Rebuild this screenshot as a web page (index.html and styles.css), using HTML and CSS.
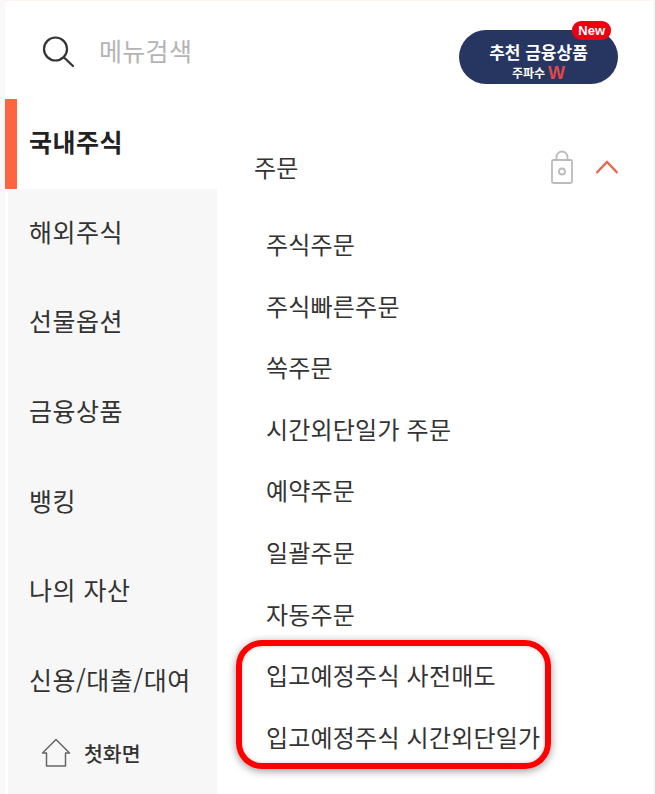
FILE: index.html
```html
<!DOCTYPE html>
<html lang="ko">
<head>
    <meta charset="UTF-8">
    <meta name="viewport" content="width=device-width, initial-scale=1.0">
    <title>메뉴</title>
    <link rel="stylesheet" href="styles.css">
</head>
<body>
    <div class="container">
        <div class="top-bar">
            <div class="search-box">
                <svg class="search-icon" width="36" height="36" viewBox="0 0 36 36" fill="none" stroke="#333" stroke-width="2.2" stroke-linecap="round">
                    <circle cx="15.5" cy="15" r="11.5"/>
                    <path d="M24 23.5 L33 32"/>
                </svg>
                <span class="search-text">메뉴검색</span>
            </div>
            <div class="promo-button">
                <span class="promo-title">추천 금융상품</span>
                <span class="promo-sub">주파수<span class="promo-w">W</span></span>
                <span class="new-badge">New</span>
            </div>
        </div>
        <div class="menu-body">
            <ul class="side-menu">
                <li class="side-item active">국내주식</li>
                <li class="side-item">해외주식</li>
                <li class="side-item">선물옵션</li>
                <li class="side-item">금융상품</li>
                <li class="side-item">뱅킹</li>
                <li class="side-item">나의 자산</li>
                <li class="side-item">신용/대출/대여</li>
                <li class="home-item">
                    <svg width="30" height="30" viewBox="0 0 30 30" fill="none" stroke="#666" stroke-width="1.5" stroke-linejoin="round">
                        <path d="M1.5 15 L15 1.5 L28.5 15 H24.5 V28 H5.5 V15 Z"/>
                    </svg>
                    <span>첫화면</span>
                </li>
            </ul>
            <div class="sub-menu">
                <div class="sub-header">
                    <span class="sub-title">주문</span>
                    <svg class="lock-icon" width="24" height="34" viewBox="0 0 24 34" fill="none" stroke="#bbb" stroke-width="1.8">
                        <rect x="2" y="10" width="20" height="23" rx="1.5"/>
                        <path d="M6.5 10 V7 a5.5 5.5 0 0 1 11 0 V10"/>
                        <circle cx="12" cy="21.5" r="3"/>
                    </svg>
                    <svg class="chevron-icon" width="24" height="14" viewBox="0 0 24 14" fill="none" stroke="#e8664f" stroke-width="2.4">
                        <path d="M1.5 13 L12 2 L22.5 13"/>
                    </svg>
                </div>
                <ul class="sub-list">
                    <li>주식주문</li>
                    <li>주식빠른주문</li>
                    <li>쏙주문</li>
                    <li>시간외단일가 주문</li>
                    <li>예약주문</li>
                    <li>일괄주문</li>
                    <li>자동주문</li>
                    <li>입고예정주식 사전매도</li>
                    <li>입고예정주식 시간외단일가</li>
                </ul>
                <div class="highlight-box"></div>
            </div>
        </div>
    </div>
</body>
</html>
```

FILE: styles.css
```css
html, body {
    margin: 0;
    height: 100%;
    background-color: #fff;
    font-family: "Noto Sans CJK KR", "Noto Sans", sans-serif;
}
ul {
    list-style-type: none;
    margin: 0;
    padding: 0;
}
.container {
    width: 648px;
    height: 793px;
    margin-left: 5px;
    border-top: 1px solid #fdf3ec;
    box-shadow: -5px 0 0 #f9f9f9, 2px 0 0 #f7f7f7;
    display: flex;
    flex-direction: column;
    overflow: hidden;
}
.top-bar {
    height: 98px;
    display: flex;
    justify-content: space-between;
    align-items: flex-start;
    flex-shrink: 0;
}
.search-box {
    display: flex;
    align-items: center;
    padding: 33px 0 0 35px;
}
.search-icon {
    margin-right: 23px;
}
.search-text {
    font-size: 25px;
    letter-spacing: 0.3px;
    color: #b4b4b4;
    line-height: 32px;
    padding-bottom: 4px;
}
.promo-button {
    position: relative;
    width: 159px;
    height: 54px;
    margin: 29px 35px 0 0;
    padding-top: 11px;
    box-sizing: border-box;
    border-radius: 27px;
    background-color: #263660;
    color: #fff;
    display: flex;
    flex-direction: column;
    align-items: center;
}
.promo-title {
    font-size: 17px;
    font-weight: 700;
    line-height: 22px;
}
.promo-sub {
    display: flex;
    align-items: center;
    gap: 3px;
    height: 18px;
    margin-top: 1px;
    font-size: 12px;
    font-weight: 700;
    line-height: 18px;
}
.promo-w {
    font-family: "Liberation Sans", sans-serif;
    font-size: 18px;
    color: #e0474c;
}
.new-badge {
    position: absolute;
    top: -9px;
    right: 7px;
    padding: 0 6px;
    height: 19px;
    line-height: 19px;
    border-radius: 9px;
    background-color: #ee0011;
    font-family: "Liberation Sans", sans-serif;
    font-size: 13px;
    font-weight: 700;
}
.menu-body {
    flex: 1;
    display: flex;
}
.side-menu {
    width: 212px;
    background-color: #f7f7f7;
    border-left: 3px solid #fff;
    box-sizing: border-box;
    flex-shrink: 0;
}
.side-item {
    height: 89.6px;
    display: flex;
    align-items: center;
    padding: 0 0 5px 21px;
    font-size: 25px;
    letter-spacing: 0.5px;
    color: #333;
    box-sizing: border-box;
}
.side-item.active {
    margin-left: -3px;
    background-color: #fff;
    border-left: 12px solid #ff6442;
    padding: 0 0 6px 12px;
    color: #222;
    font-weight: 700;
}
.home-item {
    display: flex;
    align-items: center;
    padding-left: 33px;
    margin-top: 12px;
    gap: 13px;
    font-size: 20.5px;
    font-weight: 500;
    color: #333;
}
.sub-menu {
    position: relative;
    flex: 1;
    padding-left: 37px;
}
.sub-header {
    display: flex;
    align-items: center;
    height: 34px;
    margin-top: 51px;
    padding-right: 34px;
}
.sub-title {
    flex: 1;
    font-size: 24px;
    letter-spacing: 0.2px;
    color: #333;
    padding-bottom: 2px;
}
.lock-icon {
    margin-right: 21px;
}
.sub-list {
    margin-top: 29px;
    padding-left: 12px;
}
.sub-list li {
    height: 61.6px;
    line-height: 61.6px;
    font-size: 24px;
    letter-spacing: 0.2px;
    color: #333;
    white-space: nowrap;
}
.highlight-box {
    position: absolute;
    left: 19px;
    top: 541px;
    width: 303px;
    height: 117px;
    border: 6px solid #ff0000;
    border-radius: 26px;
    box-shadow: 0 2px 8px rgba(0, 0, 0, 0.4), inset 0 0 4px rgba(0, 0, 0, 0.2);
}
```
